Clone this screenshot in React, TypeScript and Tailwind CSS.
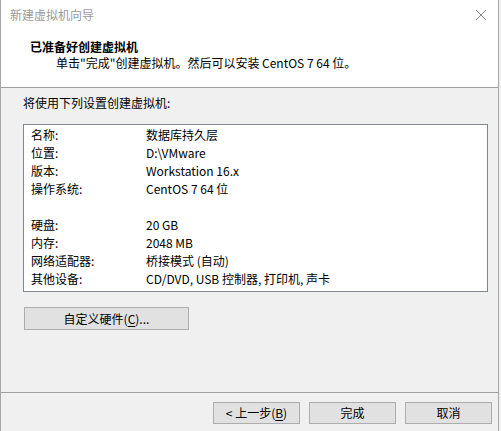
import React from "react";

const rows: [string, string][] = [
  ["名称:", "数据库持久层"],
  ["位置:", "D:\\VMware"],
  ["版本:", "Workstation 16.x"],
  ["操作系统:", "CentOS 7 64 位"],
  ["", ""],
  ["硬盘:", "20 GB"],
  ["内存:", "2048 MB"],
  ["网络适配器:", "桥接模式 (自动)"],
  ["其他设备:", "CD/DVD, USB 控制器, 打印机, 声卡"],
];

const font = { fontFamily: '"Noto Sans CJK SC", sans-serif' };

const WinButton = ({ children, className = "" }: { children: React.ReactNode; className?: string }) => (
  <button
    className={`flex items-center justify-center border border-[#adadad] bg-[#e1e1e1] text-[12px] leading-[16px] text-black ${className}`}
  >
    {children}
  </button>
);

export default function App() {
  return (
    <div className="w-[501px] h-[431px] overflow-hidden bg-[#f0f0f0] text-[12px] leading-[16px] text-black" style={font}>
      <div className="flex h-full w-[499px] flex-col border-x border-[#a7a7a7] bg-[#f0f0f0]">
        {/* header */}
        <div className="h-[88px] shrink-0 border-b border-[#a0a0a0] bg-white">
          <div className="flex h-[30px] items-center justify-between pl-[9px] pr-[9px]">
            <span className="text-[#9a9a9a]">新建虚拟机向导</span>
            <svg width="12" height="12" viewBox="0 0 12 12" className="mr-[2px]">
              <path d="M1 1L11 11M11 1L1 11" stroke="#8a8a8a" strokeWidth="1" />
            </svg>
          </div>
          <div className="mt-[9px] pl-[29px] font-bold">已准备好创建虚拟机</div>
          <div className="pl-[55px]">单击"完成"创建虚拟机。然后可以安装 CentOS 7 64 位。</div>
        </div>

        {/* body */}
        <div className="flex h-[304px] shrink-0 flex-col pl-[22px] pt-[7px]">
          <div>将使用下列设置创建虚拟机:</div>
          <div className="mt-[13px] h-[168px] w-[465px] border border-[#828790] bg-white pt-[1px] pl-[7px]">
            {rows.map(([k, v], i) => (
              <div key={i} className="flex h-[18px] items-center">
                <span className="w-[115px] shrink-0">{k}</span>
                <span>{v}</span>
              </div>
            ))}
          </div>
          <WinButton className="ml-[1px] mt-[15px] h-[23px] w-[165px]">
            自定义硬件(<span className="underline underline-offset-2">C</span>)...
          </WinButton>
        </div>

        {/* footer */}
        <div className="flex flex-1 justify-end gap-[9px] border-t border-[#a0a0a0] pr-[6px] pt-[9px]">
          <WinButton className="h-[22px] w-[87px]">
            &lt; 上一步(<span className="underline underline-offset-2">B</span>)
          </WinButton>
          <WinButton className="h-[22px] w-[87px]">完成</WinButton>
          <WinButton className="h-[22px] w-[87px]">取消</WinButton>
        </div>
      </div>
    </div>
  );
}
